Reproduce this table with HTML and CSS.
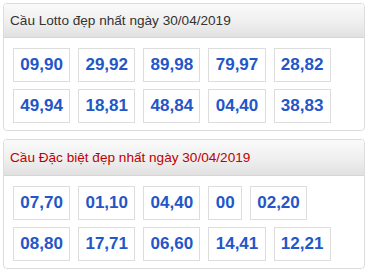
FILE: index.html
```html
<!DOCTYPE html>
<html>
<head>
<meta charset="utf-8">
<link rel="stylesheet" href="styles.css">
</head>
<body>
<div class="wrap">
  <section class="panel">
    <div class="panel-head">Cầu Lotto đẹp nhất ngày 30/04/2019</div>
    <div class="panel-body">
      <div class="row">
        <span class="num">09,90</span><span class="num">29,92</span><span class="num">89,98</span><span class="num">79,97</span><span class="num">28,82</span>
      </div>
      <div class="row">
        <span class="num">49,94</span><span class="num">18,81</span><span class="num">48,84</span><span class="num">04,40</span><span class="num">38,83</span>
      </div>
    </div>
  </section>
  <section class="panel">
    <div class="panel-head special">Cầu Đặc biệt đẹp nhất ngày 30/04/2019</div>
    <div class="panel-body">
      <div class="row">
        <span class="num">07,70</span><span class="num">01,10</span><span class="num">04,40</span><span class="num">00</span><span class="num">02,20</span>
      </div>
      <div class="row">
        <span class="num">08,80</span><span class="num">17,71</span><span class="num">06,60</span><span class="num">14,41</span><span class="num">12,21</span>
      </div>
    </div>
  </section>
</div>
</body>
</html>
```
FILE: styles.css
```css
html, body {
  margin: 0;
  padding: 0;
  background: #ffffff;
}
body {
  font-family: "Liberation Sans", Arial, sans-serif;
}
.wrap {
  padding: 3px 4px 0 3px;
  display: flex;
  flex-direction: column;
  gap: 8px;
}
.panel {
  border: 1px solid #dcdcdc;
  border-radius: 4px;
  overflow: hidden;
  background: #fff;
}
.panel-head {
  height: 33px;
  line-height: 33px;
  padding-left: 6px;
  font-size: 13.6px;
  color: #333333;
  background: linear-gradient(to bottom, #fafafa 0%, #efefef 55%, #e1e1e1 100%);
  border-bottom: 1px solid #d6d6d6;
}
.panel-head.special {
  height: 35px;
  line-height: 35px;
  color: #c00000;
}
.panel-body {
  padding: 10px 9px 7px 9px;
  display: flex;
  flex-direction: column;
  gap: 7px;
}
.row {
  display: flex;
  gap: 8px;
}
.num {
  display: block;
  height: 32px;
  line-height: 32px;
  padding: 0 6.3px;
  border: 1px solid #dddddd;
  font-size: 17px;
  font-weight: bold;
  color: #2356c8;
}
```
